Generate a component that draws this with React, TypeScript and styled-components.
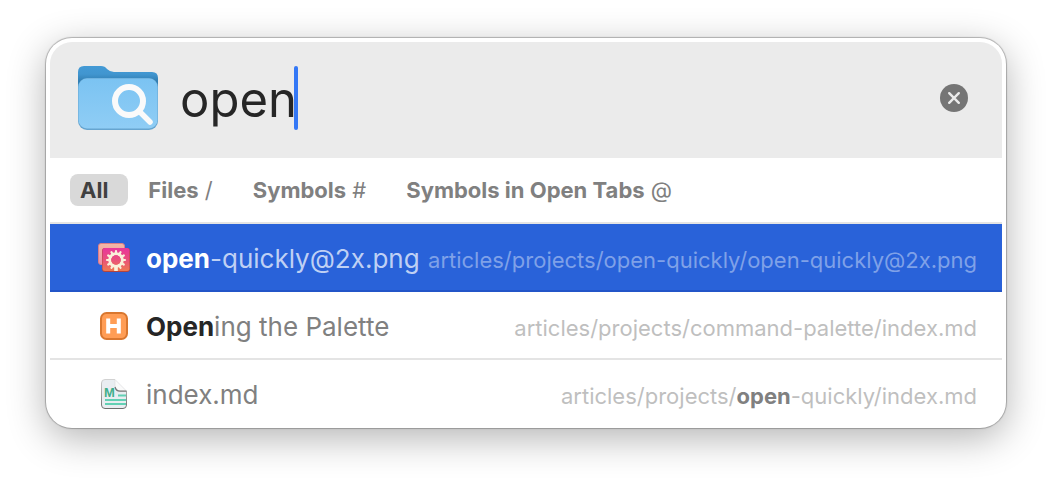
import React, { useState } from "react";
import styled, { createGlobalStyle } from "styled-components";

const GlobalStyle = createGlobalStyle`
  *, *::before, *::after { box-sizing: border-box; }
  body {
    margin: 0;
    background: #fff;
    font-family: Inter, "Liberation Sans", sans-serif;
  }
`;

const Stage = styled.main`
  padding: 38px 46px 54px;
`;

const Palette = styled.section`
  padding: 4px;
  border-radius: 26px;
  background: #fff;
  box-shadow:
    0 0 1px 1px rgba(0, 0, 0, 0.26),
    0 10px 38px rgba(0, 0, 0, 0.3);
`;

const SearchBar = styled.div`
  display: flex;
  align-items: center;
  height: 116px;
  padding: 0 34px 4px 28px;
  border-radius: 22px 22px 0 0;
  background: #ebebeb;
`;

const SearchLabel = styled.label`
  display: flex;
  flex: 1;
  align-items: center;
  min-width: 0;
`;

const SearchInput = styled.input`
  field-sizing: content;
  min-width: 4px;
  margin-left: 22px;
  padding: 4px 0 0;
  border: 0;
  outline: 0;
  background: transparent;
  color: #262626;
  font: 400 49px/60px Inter, "Liberation Sans", sans-serif;
`;

const Caret = styled.span`
  width: 4px;
  height: 64px;
  margin-left: -3px;
  border-radius: 2px;
  background: #3478f6;
`;

const ClearButton = styled.button`
  display: flex;
  padding: 0;
  border: 0;
  border-radius: 50%;
  background: none;
`;

const Scopes = styled.nav`
  display: flex;
  align-items: center;
  gap: 10px;
  height: 66px;
  padding: 0 20px;
  border-bottom: 2px solid #e4e4e4;
`;

const Scope = styled.button<{ $active: boolean }>`
  height: 32px;
  padding: 0 20px 0 10px;
  border: 0;
  border-radius: 8px;
  background: ${(p) => (p.$active ? "#d9d9d9" : "transparent")};
  color: ${(p) => (p.$active ? "#404040" : "#808080")};
  font: 700 22px/32px Inter, "Liberation Sans", sans-serif;
  white-space: nowrap;
`;

const Shortcut = styled.span`
  font-weight: 400;
`;

const Results = styled.ul`
  margin: 0 0 -4px;
  padding: 0;
  list-style: none;
`;

const Texts = styled.div`
  display: flex;
  flex: 1;
  align-items: baseline;
  gap: 8px;
  min-width: 0;
`;

const Title = styled.span`
  font-size: 26px;
  white-space: nowrap;
`;

const Path = styled.span`
  flex: 1;
  font-size: 22px;
  text-align: right;
  white-space: nowrap;
`;

const Result = styled.li<{ $selected: boolean }>`
  display: flex;
  align-items: center;
  gap: 14px;
  height: 68px;
  padding: 2px 25px 0 48px;
  border-bottom: 2px solid ${(p) => (p.$selected ? "#2355c8" : "#e4e4e4")};
  background: ${(p) => (p.$selected ? "#2962d9" : "transparent")};

  &:last-child {
    border-bottom-color: transparent;
  }

  b {
    font-weight: 700;
  }
  ${Title} {
    color: ${(p) => (p.$selected ? "#bfd0f4" : "#808080")};
  }
  ${Title} b {
    color: ${(p) => (p.$selected ? "#ffffff" : "#262626")};
  }
  ${Path} {
    color: ${(p) => (p.$selected ? "#7fa1e8" : "#bfbfbf")};
  }
  ${Path} b {
    color: ${(p) => (p.$selected ? "#ffffff" : "#808080")};
  }
`;

const Icon = styled.svg`
  display: block;
  flex: none;
`;

const FolderIcon = () => (
  <Icon width="80" height="64" viewBox="0 0 80 64" aria-hidden="true">
    <defs>
      <linearGradient id="folderBack" x1="0" y1="0" x2="0" y2="1">
        <stop offset="0" stopColor="#439ad5" />
        <stop offset="0.16" stopColor="#4196d0" />
        <stop offset="0.3" stopColor="#327fb3" />
      </linearGradient>
      <linearGradient id="folderFront" x1="0" y1="0" x2="0" y2="1">
        <stop offset="0" stopColor="#7bc3f2" />
        <stop offset="1" stopColor="#8fcdf5" />
      </linearGradient>
    </defs>
    <path
      d="M0 6Q0 0 6 0H23Q27 0 29 3Q32 6 36 6H74Q80 6 80 12V50H0Z"
      fill="url(#folderBack)"
    />
    <rect y="12" width="80" height="52" rx="9" fill="#66a5d0" />
    <rect x="0.5" y="12.5" width="79" height="50" rx="8.5" fill="url(#folderFront)" />
    <circle cx="51" cy="35" r="14" fill="none" stroke="#fafafa" strokeWidth="6" />
    <path d="M61 45L72 56" stroke="#fafafa" strokeWidth="5.5" strokeLinecap="round" />
  </Icon>
);

const ClearIcon = () => (
  <Icon width="28" height="28" viewBox="0 0 28 28" aria-hidden="true">
    <circle cx="14" cy="14" r="14" fill="#757575" />
    <path d="M9.2 9.2l9.6 9.6M18.8 9.2l-9.6 9.6" stroke="#ebebeb" strokeWidth="2.4" strokeLinecap="round" />
  </Icon>
);

const PETALS = Array.from({ length: 12 }, (_, i) => i * 30);

const ImageIcon = () => (
  <Icon width="34" height="32" viewBox="0 0 34 32" aria-hidden="true">
    <defs>
      <linearGradient id="imageFront" x1="0" y1="0" x2="0" y2="1">
        <stop offset="0" stopColor="#e9359c" />
        <stop offset="0.5" stopColor="#e94f7c" />
        <stop offset="1" stopColor="#ee7a51" />
      </linearGradient>
      <linearGradient id="imageBack" x1="0" y1="0" x2="0" y2="1">
        <stop offset="0" stopColor="#f4b8a4" />
        <stop offset="1" stopColor="#ee8fab" />
      </linearGradient>
    </defs>
    <rect x="0.5" y="1.5" width="26" height="21" rx="2.5" fill="url(#imageBack)" stroke="#dc7e86" />
    <rect x="4" y="6" width="28" height="24" rx="3" fill="#b2443f" />
    <rect x="4.5" y="6" width="27" height="23" rx="2.5" fill="url(#imageFront)" />
    <g stroke="#faf0da" strokeWidth="2.2" strokeLinecap="round">
      {PETALS.map((a) => (
        <path key={a} d="M18 9V12" transform={`rotate(${a} 18 18)`} />
      ))}
    </g>
    <circle cx="18" cy="18" r="6.4" fill="none" stroke="#faf0da" strokeWidth="2.8" />
    <path d="M18 24V29" stroke="#faf0da" strokeWidth="3.6" />
  </Icon>
);

const HeadingIcon = () => (
  <Icon width="34" height="32" viewBox="0 0 34 32" aria-hidden="true">
    <rect x="3" y="3" width="26" height="26" rx="5.5" fill="#ff9d55" stroke="#d9772f" strokeWidth="2" />
    <path d="M10.2 8.5V23.5M20.8 8.5V23.5M10.2 16H20.8" stroke="#fff" strokeWidth="4" fill="none" />
  </Icon>
);

const PageLetter = styled.text`
  fill: #3fae8a;
  font: 800 13px "Liberation Sans", sans-serif;
  font-weight: 700;
`;

const MarkdownIcon = () => (
  <Icon width="34" height="32" viewBox="0 0 34 32" aria-hidden="true">
    <defs>
      <linearGradient id="pageEdge" x1="0" y1="0" x2="0" y2="1">
        <stop offset="0" stopColor="#d2d2d2" />
        <stop offset="1" stopColor="#6e6e6e" />
      </linearGradient>
    </defs>
    <path
      d="M7 1.5H17L28.5 13V27Q28.5 30.5 25 30.5H7Q3.5 30.5 3.5 27V5Q3.5 1.5 7 1.5Z"
      fill="#e9edf1"
    />
    <path
      d="M28.5 13V27Q28.5 30.5 25 30.5H7Q3.5 30.5 3.5 27V5Q3.5 1.5 7 1.5H17"
      fill="none"
      stroke="url(#pageEdge)"
    />
    <path d="M17 1.5L28.5 13H21Q17 12 17 8Z" fill="#fafafa" stroke="#dcdcdc" strokeWidth="0.6" />
    <path d="M17 9Q18 13 22 13.2H28.5" fill="none" stroke="#777" strokeWidth="1.2" />
    <PageLetter x="6" y="19">M</PageLetter>
    <path d="M20 17.5H28M7 22H28M7 26H28" stroke="#62d0b4" strokeWidth="2" />
  </Icon>
);

const SCOPES = [
  { name: "All", key: "" },
  { name: "Files", key: "/" },
  { name: "Symbols", key: "#" },
  { name: "Symbols in Open Tabs", key: "@" },
];

const RESULTS = [
  {
    icon: <ImageIcon />,
    title: <><b>open</b>-quickly@2x.png</>,
    path: <>articles/projects/open-quickly/open-quickly@2x.png</>,
  },
  {
    icon: <HeadingIcon />,
    title: <><b>Open</b>ing the Palette</>,
    path: <>articles/projects/command-palette/index.md</>,
  },
  {
    icon: <MarkdownIcon />,
    title: <>index.md</>,
    path: <>articles/projects/<b>open</b>-quickly/index.md</>,
  },
];

export default function App() {
  const [query, setQuery] = useState("open");
  const [scope, setScope] = useState("All");
  const [selected, setSelected] = useState(0);

  return (
    <>
      <GlobalStyle />
      <Stage>
        <Palette>
          <SearchBar>
            <SearchLabel>
              <FolderIcon />
              <SearchInput
                aria-label="Open quickly"
                size={4}
                value={query}
                onChange={(e) => setQuery(e.target.value)}
              />
              <Caret />
            </SearchLabel>
            <ClearButton type="button" aria-label="Clear" onClick={() => setQuery("")}>
              <ClearIcon />
            </ClearButton>
          </SearchBar>
          <Scopes>
            {SCOPES.map((s) => (
              <Scope
                key={s.name}
                type="button"
                $active={s.name === scope}
                onClick={() => setScope(s.name)}
              >
                {s.name}
                {s.key && <Shortcut> {s.key}</Shortcut>}
              </Scope>
            ))}
          </Scopes>
          <Results role="listbox" aria-label="Results">
            {RESULTS.map((r, i) => (
              <Result
                key={i}
                role="option"
                aria-selected={i === selected}
                $selected={i === selected}
                onClick={() => setSelected(i)}
              >
                {r.icon}
                <Texts>
                  <Title>{r.title}</Title>
                  <Path>{r.path}</Path>
                </Texts>
              </Result>
            ))}
          </Results>
        </Palette>
      </Stage>
    </>
  );
}
